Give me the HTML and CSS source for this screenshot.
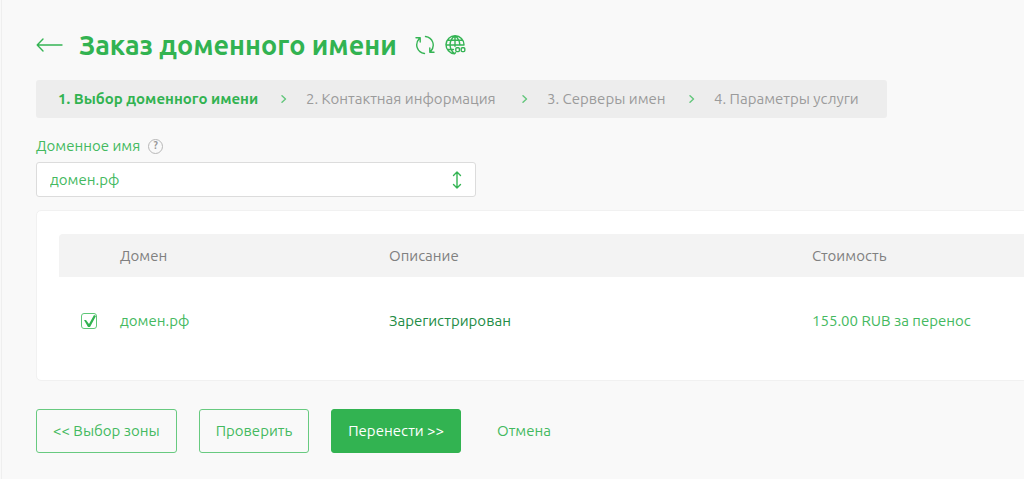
FILE: index.html
```html
<!DOCTYPE html>
<html lang="ru">
<head>
<meta charset="utf-8">
<meta name="viewport" content="width=device-width, initial-scale=1">
<title>Заказ доменного имени</title>
<link rel="stylesheet" href="styles.css">
</head>
<body>
<main class="page">
  <header class="head">
    <a class="back" href="#" aria-label="Назад">
      <svg width="27" height="14" viewBox="0 0 27 14"><path d="M7 1 1.2 7 7 13M1.2 7H26"/></svg>
    </a>
    <h1 class="title">Заказ доменного имени</h1>
    <div class="tools">
      <button class="tool" type="button" aria-label="Обновить">
        <svg width="20" height="20" viewBox="0 0 20 20"><path d="M9.500 18.500C2.200 17.500-.8 9.300 4.300 3.500M1 2.800h4.200v4.200M10.500 1.500c7.300 1 10.200 9 5.200 15M19 17.200h-4.200V13"/></svg>
      </button>
      <button class="tool" type="button" aria-label="Домены">
        <svg width="21" height="20" viewBox="0 0 21 20"><path d="M9.500 18.700A9 9 0 1 1 19 9.800M9.500 18.700C3.500 14 3.500 5 10 .8c3.200 2.300 4.700 5.500 4.800 9M10 .8v10.500M9.500 18.700l1-1M2.800 5.300h14.400M1 10h18M2.500 14.500h6"/><rect x="10.800" y="12.800" width="3.600" height="3.800" rx="1"/><rect x="16.200" y="12.800" width="3.600" height="3.800" rx="1"/></svg>
      </button>
    </div>
  </header>

  <ol class="steps">
    <li class="step step-current" aria-current="step">1. Выбор доменного имени <svg class="sep" width="6" height="8" viewBox="0 0 6 8"><path d="m1 .8 3.500 3.200L1 7.200"/></svg></li>
    <li class="step">2. Контактная информация <svg class="sep" width="6" height="8" viewBox="0 0 6 8"><path d="m1 .8 3.500 3.200L1 7.200"/></svg></li>
    <li class="step">3. Серверы имен <svg class="sep" width="6" height="8" viewBox="0 0 6 8"><path d="m1 .8 3.500 3.200L1 7.200"/></svg></li>
    <li class="step">4. Параметры услуги</li>
  </ol>

  <div class="field">
    <div class="field-head">
      <label for="domain">Доменное имя</label>
      <button class="help" type="button" aria-label="Справка">?</button>
    </div>
    <div class="select-wrap">
      <select class="select" id="domain"><option>домен.рф</option></select>
      <svg class="select-arrow" width="10" height="18" viewBox="0 0 10 18"><path d="M5 1v16M1.500 4.500 5 1l3.500 3.500M1.500 13.500 5 17l3.500-3.500"/></svg>
    </div>
  </div>

  <section class="card">
    <table class="table">
      <colgroup><col class="col-check"><col class="col-name"><col class="col-note"><col></colgroup>
      <thead>
        <tr><th></th><th>Домен</th><th>Описание</th><th>Стоимость</th></tr>
      </thead>
      <tbody>
        <tr>
          <td class="cell-check"><input class="check" type="checkbox" id="row1" checked></td>
          <td><label for="row1">домен.рф</label></td>
          <td class="status">Зарегистрирован</td>
          <td>155.00 RUB за перенос</td>
        </tr>
      </tbody>
    </table>
  </section>

  <div class="actions">
    <button class="btn" type="button">&lt;&lt; Выбор зоны</button>
    <button class="btn" type="button">Проверить</button>
    <button class="btn btn-main" type="button">Перенести &gt;&gt;</button>
    <a class="cancel" href="#">Отмена</a>
  </div>
</main>
</body>
</html>
```
FILE: styles.css
```css
* { box-sizing: border-box; }

body {
  margin: 0;
  background: #f9f9f9;
  color: #44b960;
  font: 15px/20px Ubuntu, "Noto Sans", sans-serif;
  overflow-x: hidden;
}

button, select { font: inherit; color: inherit; }

svg {
  display: block;
  fill: none;
  stroke: #35b454;
  stroke-width: 1.4;
  stroke-linecap: round;
  stroke-linejoin: round;
}

.page {
  min-height: 100vh;
  margin-left: 1px;
  padding: 28px 0 26px 34px;
  border-left: 1px solid #efefef;
}

.head { display: flex; align-items: center; height: 34px; }
.back { margin-right: 16px; }
.title {
  margin: 0;
  color: #32b351;
  font-size: 27px;
  line-height: 34px;
  font-weight: 600;
  white-space: nowrap;
}
.tools { display: flex; gap: 10px; margin-left: 18px; }
.tool { padding: 0; border: 0; background: none; }

.steps {
  display: grid;
  grid-template-columns: 248fr 241fr 167fr 151fr;
  align-items: center;
  max-width: 851px;
  min-height: 38px;
  margin: 18px 0 0;
  padding: 0 22px;
  list-style: none;
  background: #ededed;
  border-radius: 3px;
  color: #9b9b9b;
  white-space: nowrap;
}
.step { display: flex; align-items: center; justify-content: space-between; }
.step-current { color: #32b351; font-weight: 600; }
.sep { margin-right: 19px; stroke: #62c67b; }

.field { max-width: 440px; margin-top: 18px; }
.field-head { display: flex; align-items: center; gap: 8px; }
.help {
  width: 15px;
  height: 15px;
  padding: 0;
  border: 1px solid #b8b8b8;
  border-radius: 50%;
  background: none;
  color: #999;
  font-size: 10px;
  line-height: 12px;
  font-weight: 700;
}
.select-wrap { position: relative; margin-top: 6px; }
.select {
  display: block;
  width: 100%;
  height: 35px;
  padding: 0 40px 0 13px;
  appearance: none;
  background: #fff;
  border: 1px solid #dcdcdc;
  border-radius: 3px;
}
.select-arrow {
  position: absolute;
  top: 9px;
  right: 14px;
  pointer-events: none;
}

.card {
  margin: 13px -10px 0 0;
  padding: 23px 0 18px 22px;
  background: #fff;
  border: 1px solid #f1f1f1;
  border-radius: 5px;
}
.table { width: 100%; table-layout: fixed; border-spacing: 0; }
.col-check { width: 61px; }
.col-name { width: 269px; }
.col-note { width: 423px; }
.table th {
  height: 43px;
  padding: 0;
  background: #f3f3f3;
  color: #808080;
  font-weight: 400;
  text-align: left;
}
.table th:first-child { border-top-left-radius: 4px; }
.table td { height: 85px; padding: 3px 0 0; }
.table .cell-check { padding-left: 22px; }
.table .status { color: #238c46; }
.check {
  display: block;
  width: 16px;
  height: 16px;
  margin: 0;
  appearance: none;
  border: 1px solid #5ec777;
  border-radius: 3px;
}
.check:checked::before {
  content: "";
  display: block;
  width: 14px;
  height: 14px;
  background: #32b351;
  clip-path: polygon(2px 6px, 4px 6px, 7px 10px, 12px 1px, 14px 2px, 8px 13px, 6px 13px);
}

.actions { display: flex; align-items: center; gap: 22px; margin-top: 28px; }
.btn {
  height: 44px;
  padding: 0 16px;
  border: 1px solid #68ca80;
  border-radius: 3px;
  background: none;
  white-space: nowrap;
}
.btn-main { background: #32b351; border-color: #32b351; color: #fff; }
.cancel { margin-left: 14px; color: inherit; text-decoration: none; }
```
